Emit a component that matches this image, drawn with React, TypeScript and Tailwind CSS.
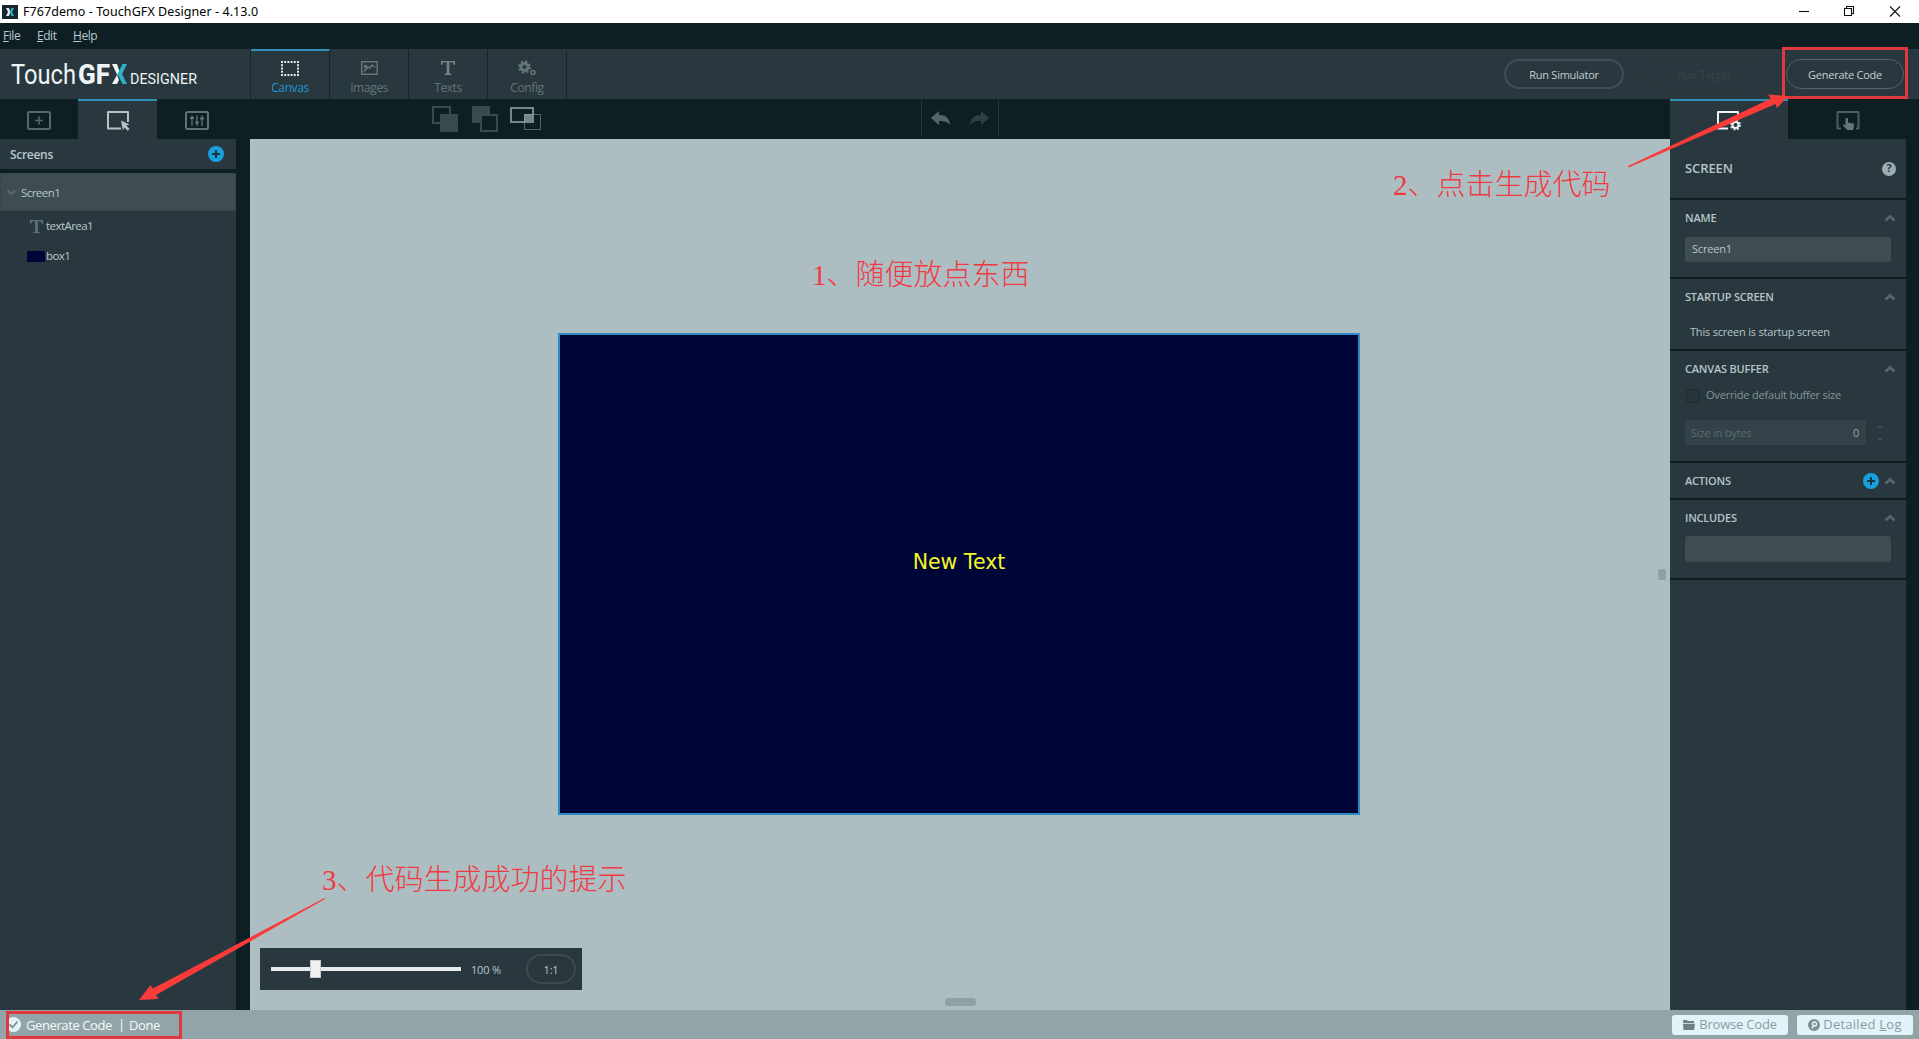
import React from 'react';

const Plus = () => (
  <svg width="16" height="16" viewBox="0 0 16 16" className="block">
    <circle cx="8" cy="8" r="8" fill="#1a9fdc" />
    <path d="M8 4v8M4 8h8" stroke="#123844" strokeWidth="2" />
  </svg>
);

const Chevron = ({ className = '' }: { className?: string }) => (
  <svg width="12" height="8" viewBox="0 0 12 8" className={className}>
    <path d="M1.500 6.500L6 2.300l4.500 4.200" fill="none" stroke="#55676c" strokeWidth="2.600" />
  </svg>
);

const SerifT = ({ size, color }: { size: number; color: string }) => (
  <svg width={size} height={size} viewBox="0 0 14 14" fill={color}>
    <path d="M0 0h14v4h-1.2C12.500 2 12 1.300 10 1.300H8.400V11.500c0 1 .4 1.300 2 1.400V14H3.600v-1.100c1.600-.1 2-.4 2-1.400V1.300H4C2 1.300 1.500 2 1.200 4H0z" />
  </svg>
);

function Logo() {
  return (
    <svg width="220" height="50" viewBox="0 0 220 50" fontFamily="Roboto, sans-serif" fill="#eef4f5">
      <text x="11" y="35" fontSize="27.500" textLength="65" lengthAdjust="spacingAndGlyphs">Touch</text>
      <text x="78" y="35" fontSize="27.500" fontWeight="800" textLength="32" lengthAdjust="spacingAndGlyphs">GF</text>
      <path d="M112 15h5l2.500 7.500-2 4zM112 35h5l2-4-2-5z" />
      <path d="M122.500 15h4.500l-5 10 5 10h-4.500l-5-10z" fill="#2ab3c9" />
      <text x="130" y="35" fontSize="14.500" textLength="67" lengthAdjust="spacingAndGlyphs">DESIGNER</text>
    </svg>
  );
}

function ToolTab({ label, active, children }: { label: string; active?: boolean; children: React.ReactNode }) {
  return (
    <div
      className={
        'flex w-[79px] flex-col items-center border-r border-r-[#14262b] border-t-2 ' +
        (active ? 'border-t-[#2f93b8] text-[#1e96d2]' : 'border-t-transparent text-[#62747a]')
      }
    >
      <div className="mt-[9px] flex h-[16px] items-center">{children}</div>
      <div className="mt-[3px] text-[12px] leading-[17px] tracking-[-0.4px]">{label}</div>
    </div>
  );
}

function Header() {
  return (
    <div className="flex h-[50px] bg-[#29383e]">
      <div className="flex w-[251px] items-start border-r border-[#14262b]">
        <Logo />
      </div>
      <ToolTab label="Canvas" active>
        <svg width="18" height="15" viewBox="0 0 18 15" fill="none" stroke="#e0e8ea" strokeWidth="2">
          <path d="M0 1h18M0 14h18" strokeDasharray="2 1.200" />
          <path d="M1 0v15M17 0v15" strokeDasharray="2 1.250" />
        </svg>
      </ToolTab>
      <ToolTab label="Images">
        <svg width="17" height="14" viewBox="0 0 17 14" fill="none" stroke="#65767b" strokeWidth="1.500">
          <rect x=".75" y=".75" width="15.500" height="12.500" />
          <path d="M3 10.500l4-4.500 2 1 2-3 3.500 2.500" />
          <path d="M3 4h3v3H3z" fill="#65767b" stroke="none" />
        </svg>
      </ToolTab>
      <ToolTab label="Texts">
        <SerifT size={14} color="#718286" />
      </ToolTab>
      <ToolTab label="Config">
        <svg width="18" height="16" viewBox="0 0 18 16" fill="none" stroke="#65767b">
          <circle cx="6.500" cy="7" r="3.500" strokeWidth="2.800" />
          <circle cx="6.500" cy="7" r="5.500" strokeWidth="2" strokeDasharray="2.200 2.120" />
          <circle cx="15" cy="12.500" r="2" strokeWidth="1.500" />
        </svg>
      </ToolTab>
      <div className="flex flex-1 items-start justify-end pr-[15px] pt-[10px] text-[11px] tracking-[-0.25px] text-[#c3d0d4]">
        <div className="mr-[20px] flex h-[30px] w-[120px] items-center justify-center rounded-full border-2 border-[#3f4f55] pt-[3px]">Run Simulator</div>
        <div className="mr-[22px] flex h-[30px] w-[120px] items-center justify-center rounded-full border border-[#27363b] pt-[3px] text-[#36464c]">Run Target</div>
        <div className="flex h-[30px] w-[118px] items-center justify-center rounded-full border border-[#53636a] pt-[3px]">Generate Code</div>
      </div>
    </div>
  );
}

function SubBar() {
  return (
    <div className="flex h-[40px] bg-[#0e1f24]">
      <div className="flex w-[236px]">
        <div className="flex w-[78px] justify-center pt-[12px]">
          <svg width="24" height="20" viewBox="0 0 24 20" fill="none" stroke="#56676c" strokeWidth="2">
            <rect x="1" y="1" width="22" height="17" rx="1.500" />
            <path d="M12 5.500v8M8 9.500h8" strokeWidth="1.600" />
          </svg>
        </div>
        <div className="flex w-[79px] justify-center border-t-2 border-[#2f93b8] bg-[#29383e] pl-px pt-[10px]">
          <svg width="25" height="20" viewBox="0 0 25 20">
            <path d="M15 17.500H2V1h20v10" fill="none" stroke="#b4c3c7" strokeWidth="2" strokeLinejoin="round" />
            <path d="M15 9.500l8.500 4-3.200 1 3.200 3.500-1.800 1.700-3.300-3.300-1.500 3z" fill="#b4c3c7" />
          </svg>
        </div>
        <div className="flex w-[79px] justify-center pt-[12px]">
          <svg width="24" height="20" viewBox="0 0 24 20" fill="none" stroke="#617277" strokeWidth="2">
            <rect x="1" y="1" width="22" height="17" rx="1.500" />
            <path d="M7 4.500v10.500M12 4.500v10.500M17 4.500v10.500" strokeWidth="1.300" />
            <path d="M5 7h4M10 11.500h4M15 7.500h4" strokeWidth="2" />
          </svg>
        </div>
      </div>
      <div className="flex flex-1 items-start">
        <svg width="110" height="28" viewBox="0 0 110 28" className="ml-[196px] mt-[6px]">
          <rect x="1" y="2" width="17" height="16" fill="none" stroke="#384950" strokeWidth="2" />
          <rect x="8" y="9" width="18" height="18" fill="#384950" />
          <rect x="40" y="1" width="18" height="17" fill="#384950" />
          <rect x="49" y="10" width="16" height="16" fill="#0e1f24" stroke="#384950" strokeWidth="2" />
          <rect x="79" y="3" width="22" height="14" fill="none" stroke="#76878b" strokeWidth="2" />
          <rect x="92" y="9" width="10" height="8" fill="#76878b" />
          <rect x="92.500" y="9.500" width="16" height="15" fill="none" stroke="#9aaaae" strokeDasharray="1 1" />
        </svg>
        <div className="ml-[379px] flex h-[38px] w-[78px] items-start justify-between border-x border-[#24353a] px-[9px] pt-[12px]">
          <svg width="20" height="15" viewBox="0 0 20 15">
            <path d="M0 7L8 0v4c7 0 10 3 11.500 10.500C17 11 14 10 8 10v4z" fill="#53666c" />
          </svg>
          <svg width="20" height="15" viewBox="0 0 20 15">
            <path d="M20 7L12 0v4C5 4 2 7 .5 14.500 3 11 6 10 12 10v4z" fill="#2d3e44" />
          </svg>
        </div>
      </div>
      <div className="mr-[13px] flex w-[236px]">
        <div className="flex w-[118px] justify-center border-t-2 border-[#2f93b8] bg-[#29383e] pt-[10px]">
          <svg width="26" height="20" viewBox="0 0 26 20" fill="none" stroke="#eef3f4">
            <path d="M12 17.500H2V1h20v7" strokeWidth="2" strokeLinejoin="round" />
            <circle cx="19.500" cy="14" r="3" strokeWidth="2" />
            <circle cx="19.500" cy="14" r="4.500" strokeWidth="2" strokeDasharray="1.800 1.730" />
          </svg>
        </div>
        <div className="flex w-[118px] justify-center pl-px pt-[12px]">
          <svg width="24" height="20" viewBox="0 0 24 20">
            <path d="M5 17.500H1.500V1h21v16.500H20" fill="none" stroke="#4c5d63" strokeWidth="2" strokeLinejoin="round" />
            <path d="M9.500 8c0-1.200 2.500-1.200 2.500 0v3.500l5 1c1 .3 1.200 1 1 2L17.200 19h-6L7 14.500c-.5-1 .6-1.500 1.300-1l1.200.8z" fill="#64757b" />
          </svg>
        </div>
      </div>
    </div>
  );
}

function LeftPanel() {
  return (
    <div className="w-[236px] bg-[#29383e] text-[11.5px] tracking-[-0.55px] text-[#b9c7cc]">
      <div className="flex h-[30px] items-center justify-between pl-[10px] pr-[12px] text-[12px] font-semibold tracking-[-0.3px]">
        <span className="pt-[2px]">Screens</span>
        <Plus />
      </div>
      <div className="h-[4px] bg-[#0e1f24]" />
      <div className="flex h-[38px] items-center border border-[#37474c] bg-[#3d4d52] pl-[5px]">
        <Chevron className="mr-[4px] h-[7px] w-[11px] rotate-180" />
        <span className="pt-[2px]">Screen1</span>
      </div>
      <div className="flex h-[30px] items-center pl-[30px]">
        <SerifT size={13} color="#5f7177" />
        <span className="ml-[3px]">textArea1</span>
      </div>
      <div className="flex h-[30px] items-center pl-[27px]">
        <div className="h-[11px] w-[18px] bg-[#00043a]" />
        <span className="ml-[1px]">box1</span>
      </div>
    </div>
  );
}

function Section({ title, className, action, children }: { title: string; className: string; action?: React.ReactNode; children?: React.ReactNode }) {
  return (
    <div className={'border-b-2 border-[#0e1f24] pl-[15px] pr-[10px] ' + className}>
      <div className="flex h-[36px] items-center">
        <span className="flex-1 text-[11px] font-semibold tracking-[-0.2px]">{title}</span>
        {action}
        <Chevron className="ml-[5px]" />
      </div>
      {children}
    </div>
  );
}

function RightPanel() {
  return (
    <div className="mr-[13px] w-[236px] bg-[#29383e] text-[11px] tracking-[-0.2px] text-[#b6c5ca]">
      <div className="flex h-[61px] items-center justify-between border-b-2 border-[#0e1f24] pl-[15px] pr-[10px]">
        <span className="pt-px text-[13px] font-semibold tracking-[-0.1px]">SCREEN</span>
        <div className="flex h-[14px] w-[14px] items-center justify-center rounded-full bg-[#9daeb2] text-[11px] font-bold text-[#29383e]">?</div>
      </div>
      <Section title="NAME" className="h-[79px]">
        <div className="mt-px flex h-[25px] w-[206px] items-center rounded-[3px] bg-[#3d4d52] pl-[7px]">Screen1</div>
      </Section>
      <Section title="STARTUP SCREEN" className="h-[72px]">
        <div className="mt-[9px] pl-[5px] leading-[16px]">This screen is startup screen</div>
      </Section>
      <Section title="CANVAS BUFFER" className="h-[112px]">
        <div className="flex h-[17px] items-center text-[#84959a]">
          <div className="ml-px mr-[6px] h-[14px] w-[14px] rounded-[2px] border border-[#1f2e33] bg-[#26353a]" />
          Override default buffer size
        </div>
        <div className="mt-[16px] flex h-[25px] items-center">
          <div className="flex h-full w-[181px] items-center justify-between rounded-[2px] bg-[#324248] pl-[6px] pr-[7px] pt-px text-[#5a6c71]">
            <span>Size in bytes</span>
            <span className="text-[#94a5aa]">0</span>
          </div>
          <svg width="8" height="18" viewBox="0 0 8 18" className="ml-[10px]" fill="none" stroke="#4e5f65">
            <path d="M1.500 4L4 2l2.500 2M1.500 14L4 16l2.500-2" />
          </svg>
        </div>
      </Section>
      <Section title="ACTIONS" className="h-[37px]" action={<Plus />} />
      <Section title="INCLUDES" className="h-[80px]">
        <div className="h-[26px] w-[206px] rounded-[3px] bg-[#3d4d52]" />
      </Section>
    </div>
  );
}

const note = "absolute whitespace-nowrap font-['Liberation_Serif','Noto_Sans_CJK_SC',serif] text-[29px] leading-[36px] font-light text-[#f03a42]";

function Canvas() {
  return (
    <div className="relative ml-[14px] flex-1 bg-[#adbec3]">
      <div className="absolute left-[308px] top-[194px] flex h-[482px] w-[802px] items-center justify-center border-2 border-[#2e8ac4] bg-[#000538]">
        <span className="mt-[-24px] font-['DejaVu_Sans',sans-serif] text-[20.5px] text-[#f6f62a]">New Text</span>
      </div>
      <div className="absolute left-[10px] top-[809px] flex h-[42px] w-[322px] items-center bg-[#29383e] text-[11px] tracking-[-0.2px] text-[#b9c7cc]">
        <div className="relative ml-[11px] h-[4px] w-[190px] bg-[#e8ebec]">
          <div className="absolute left-[39px] top-[-7px] h-[18px] w-[11px] border border-[#c8cccd] bg-[#f1f1f1]" />
        </div>
        <span className="ml-[10px] w-[55px] pt-[2px]">100 %</span>
        <div className="flex h-[30px] w-[50px] items-center justify-center rounded-full border-2 border-[#3b4b50] pt-[2px]">1:1</div>
      </div>
      <div className="absolute left-[695px] top-[859px] h-[8px] w-[31px] rounded-[3px] bg-[#8fa1a5]" />
      <div className="absolute left-[1408px] top-[430px] h-[11px] w-[8px] rounded-[2px] bg-[#8fa1a5]" />
    </div>
  );
}

function Annotations() {
  return (
    <div className="pointer-events-none absolute inset-0">
      <div className={note + ' left-[812px] top-[257px]'}>1、随便放点东西</div>
      <div className={note + ' left-[1393px] top-[167px]'}>2、点击生成代码</div>
      <div className={note + ' left-[322px] top-[862px]'}>3、代码生成成功的提示</div>
      <div className="absolute left-[1782px] top-[47px] h-[52px] w-[126px] border-[3px] border-[#e0383f]" />
      <div className="absolute left-[6px] top-[1011px] h-[28px] w-[176px] border-[3px] border-[#e0383f]" />
      <svg className="absolute inset-0" width="1919" height="1039" viewBox="0 0 1919 1039" fill="#fb3a3a">
        <path d="M1628 166L1771 98.500l-3-4L1788 96l-11 12-1.500-4L1628.500 167.500z" />
        <path d="M324.500 898L153 988.500 150.500 985 139 1000l19.500-1-2.500-4L325 899z" />
      </svg>
    </div>
  );
}

export default function App() {
  return (
    <div className="relative flex h-[1039px] w-[1919px] flex-col overflow-hidden bg-[#0e1f24] font-['Open_Sans','Noto_Sans',sans-serif]">
      <div className="flex h-[23px] items-center bg-white pl-[2px] text-[12px] text-black">
        <svg width="16" height="14" viewBox="0 0 16 14">
          <rect width="16" height="14" fill="#15272d" />
          <path d="M4 3h3l1.500 4L7 11H4l2-4z" fill="#dfe8ea" />
          <path d="M12 3H9.500L8 7l1.500 4H12l-2-4z" fill="#2ab3c9" />
        </svg>
        <span className="ml-[5px] flex-1 pt-px font-['Noto_Sans',sans-serif] text-[12.500px] tracking-[0.07px]">F767demo - TouchGFX Designer - 4.13.0</span>
        <svg width="104" height="12" viewBox="0 0 104 12" className="mr-[16px]" fill="none" stroke="#111" strokeWidth="1.100">
          <path d="M0 5.500h10" />
          <path d="M45.500 2.500h7v7h-7zM47.500 2.500v-2h7v7h-2" />
          <path d="M91 .5l10 10M101 .5l-10 10" />
        </svg>
      </div>
      <div className="flex h-[26px] items-center pl-[3px] text-[12px] tracking-[-0.45px] text-[#b9c7cc]">
        <span className="w-[34px]"><u>F</u>ile</span>
        <span className="w-[36px]"><u>E</u>dit</span>
        <span><u>H</u>elp</span>
      </div>
      <Header />
      <SubBar />
      <div className="flex h-[871px]">
        <LeftPanel />
        <Canvas />
        <RightPanel />
      </div>
      <div className="flex h-[29px] items-center bg-[#93a4a8] text-[13px] text-[#f3fafb]">
        <svg width="15" height="15" viewBox="0 0 15 15" className="ml-[6px]">
          <circle cx="7.500" cy="7.500" r="7.500" fill="#e4f3f8" />
          <path d="M3.500 7.500l3 3 5-6" fill="none" stroke="#7f9196" strokeWidth="1.800" />
        </svg>
        <span className="ml-[5px] w-[92px] pt-[2px] tracking-[-0.4px]">Generate Code</span>
        <span className="w-[11px]">|</span>
        <span className="flex-1 pt-[2px] tracking-[-0.4px]">Done</span>
        <div className="mr-[9px] flex h-[20px] w-[116px] items-center justify-center gap-[4px] rounded-[3px] bg-[#e2f3fa] text-[#8b9ca1]">
          <svg width="12" height="10" viewBox="0 0 12 10" fill="#6f8085">
            <path d="M0 1V0h4l1 1h6v2H0zM0 3.800h12L11 10H.5z" />
          </svg>
          <span className="pt-px tracking-[-0.2px]">Browse Code</span>
        </div>
        <div className="mr-[6px] flex h-[20px] w-[116px] items-center justify-center gap-[3px] rounded-[3px] bg-[#e2f3fa] text-[#8b9ca1]">
          <svg width="12" height="12" viewBox="0 0 12 12">
            <circle cx="6" cy="6" r="6" fill="#7f9095" />
            <path d="M3.500 9.500L6 7M8.500 5a2 2 0 1 1-4 0 2 2 0 0 1 4 0z" fill="none" stroke="#e2f3fa" strokeWidth="1.300" />
          </svg>
          <span className="tracking-[0.25px]">Detailed <u>L</u>og</span>
        </div>
      </div>
      <Annotations />
    </div>
  );
}
